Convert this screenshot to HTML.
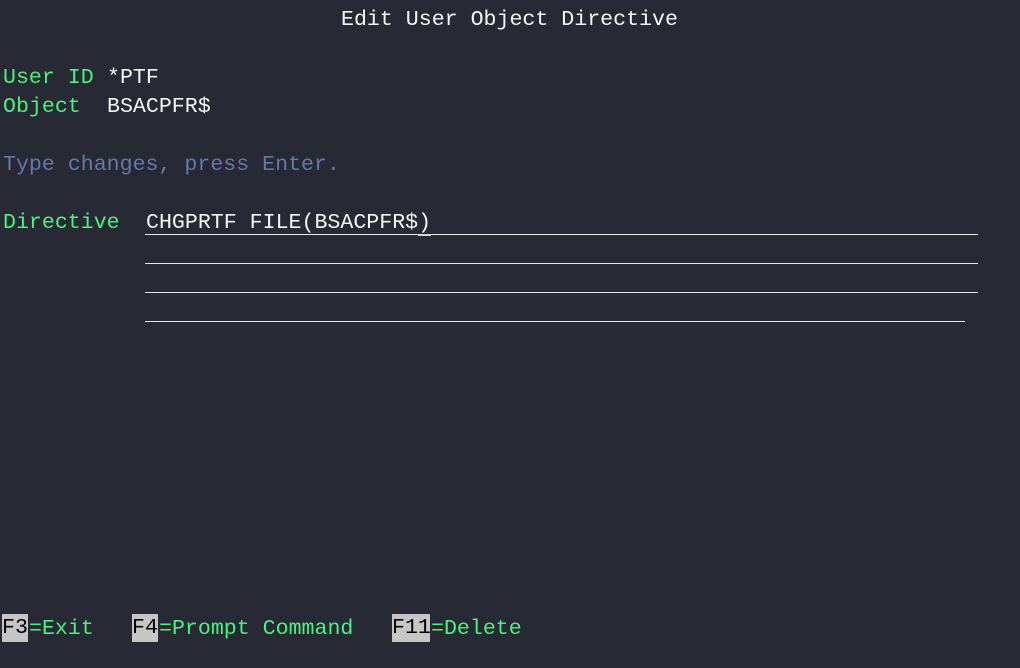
<!DOCTYPE html>
<html><head><meta charset="utf-8"><style>
html,body{margin:0;padding:0;}
body{width:1020px;height:668px;background:#272935;position:relative;overflow:hidden;font-family:"Liberation Mono","DejaVu Sans Mono",monospace;font-size:21.6px;}
.t{position:absolute;height:29px;line-height:29px;white-space:pre;}
.w{color:#f4f4f4}.g{color:#4cf07c}.b{color:#6677aa}
.ln{position:absolute;height:1px;background:#e8e8e8;left:145px;}
.k{position:absolute;background:#c6c6c6;color:#000;top:614px;height:28px;line-height:28px;white-space:pre;padding-top:0;}
</style></head><body>
<div class="t w" style="left:341px;top:6px">Edit User Object Directive</div>
<div class="t g" style="left:3px;top:64px">User ID</div>
<div class="t w" style="left:107px;top:64px">*PTF</div>
<div class="t g" style="left:3px;top:93px">Object</div>
<div class="t w" style="left:107px;top:93px">BSACPFR$</div>
<div class="t b" style="left:3px;top:151px">Type changes, press Enter.</div>
<div class="t g" style="left:3px;top:209px">Directive</div>
<div class="t w" style="left:146px;top:209px">CHGPRTF FILE(BSACPFR$)</div>
<div class="ln" style="top:234px;width:833px"></div>
<div style="position:absolute;left:418px;top:234px;width:13px;height:2px;background:#d8d8d0"></div>
<div class="ln" style="top:263px;width:833px"></div>
<div class="ln" style="top:292px;width:833px"></div>
<div class="ln" style="top:321px;width:820px"></div>
<div class="k" style="left:2px;width:26px">F3</div>
<div class="t g" style="left:29px;top:615px">=Exit</div>
<div class="k" style="left:132px;width:26px">F4</div>
<div class="t g" style="left:159px;top:615px">=Prompt Command</div>
<div class="k" style="left:392px;width:38px">F11</div>
<div class="t g" style="left:431px;top:615px">=Delete</div>
</body></html>
